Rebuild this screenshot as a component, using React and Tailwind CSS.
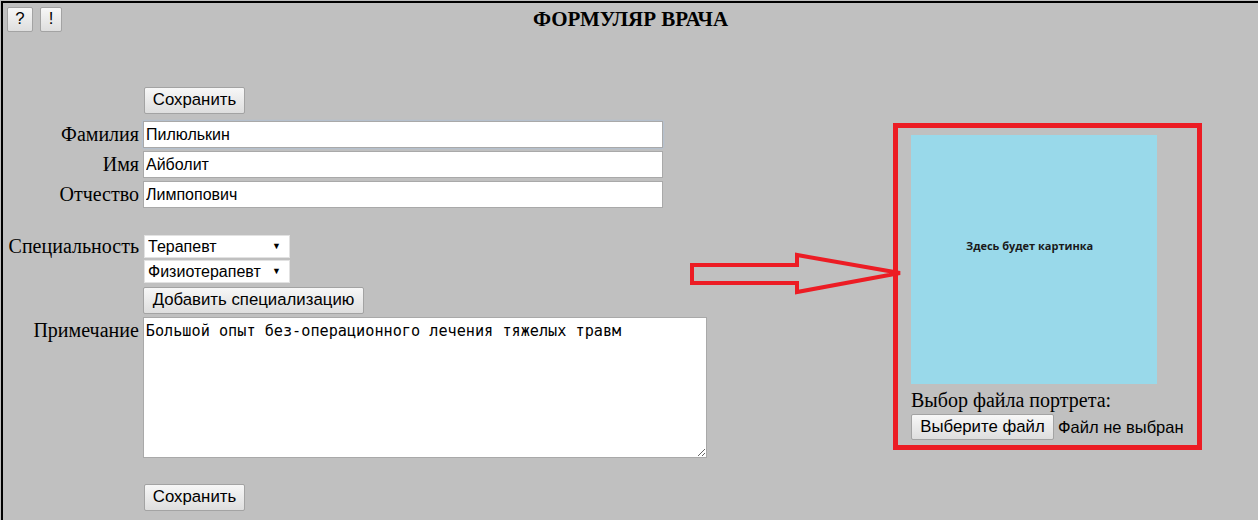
import { useState } from 'react'

const btn =
  'border border-[#a3a3a3] rounded-[2px] bg-linear-to-b from-[#f7f7f7] to-[#dedede] text-black font-["Liberation_Sans",Arial,sans-serif] text-[16.8px] leading-none flex items-center justify-center'
const field =
  'h-[27px] w-[520px] border border-[#a9a9a9] bg-white px-[2px] text-[16px] text-black font-["Liberation_Sans",Arial,sans-serif] outline-none'

function FakeSelect({ value, options }) {
  return (
    <div className="flex h-[23px] w-[146px] items-center border border-[#e2e2e2] bg-white pl-[3px] pr-[8px]">
      <select
        defaultValue={value}
        className="min-w-0 flex-1 appearance-none bg-transparent text-[16px] leading-none text-black outline-none font-['Liberation_Sans',Arial,sans-serif]"
      >
        {options.map((o) => (
          <option key={o}>{o}</option>
        ))}
      </select>
      <span className="text-[9px] leading-none text-black">▼</span>
    </div>
  )
}

function Row({ label, children, className = '' }) {
  return (
    <div className={`flex items-center ${className}`}>
      <label className="w-[136px] text-right text-[20px] leading-[27px] text-black">{label}</label>
      <div className="ml-[4px]">{children}</div>
    </div>
  )
}

export default function App() {
  const [surname, setSurname] = useState('Пилюлькин')
  const specs = ['Терапевт', 'Физиотерапевт', 'Хирург']

  return (
    <div className="relative h-[520px] w-[1258px] overflow-hidden bg-[#c0c0c0] font-['Liberation_Serif','Times_New_Roman',serif]">
      <div className="ml-px mt-px h-full border-l-2 border-t-2 border-black">
        {/* header */}
        <div className="grid grid-cols-[1fr_auto_1fr] items-start pt-[4px]">
          <div className="flex gap-[7px] pl-[4px]">
            <button className={`${btn} h-[25px] w-[26px]`}>?</button>
            <button className={`${btn} h-[25px] w-[22px]`}>!</button>
          </div>
          <h1 className="text-[21px] font-bold leading-[24px] text-black">ФОРМУЛЯР ВРАЧА</h1>
          <div />
        </div>

        <div className="flex items-start">
          {/* form */}
          <div className="flex w-[704px] flex-col">
            <div className="ml-[141px] mt-[55px]">
              <button className={`${btn} h-[27px] w-[101px]`}>Сохранить</button>
            </div>

            <Row label="Фамилия" className="mt-[7px]">
              <input
                value={surname}
                onChange={(e) => setSurname(e.target.value)}
                className={`${field} border-[#7ea6d8] shadow-[0_0_2px_#9fc0ea]`}
              />
            </Row>
            <Row label="Имя" className="mt-[3px]">
              <input defaultValue="Айболит" className={field} />
            </Row>
            <Row label="Отчество" className="mt-[3px]">
              <input defaultValue="Лимпопович" className={field} />
            </Row>

            <div className="mt-[27px] flex items-start">
              <label className="w-[136px] text-right text-[20px] leading-[23px] text-black">Специальность</label>
              <div className="ml-[5px] flex flex-col">
                <FakeSelect value="Терапевт" options={specs} />
                <div className="mt-[2px]">
                  <FakeSelect value="Физиотерапевт" options={specs} />
                </div>
                <button className={`${btn} mt-[4px] ml-[-1px] h-[27px] w-[221px]`}>Добавить специализацию</button>
              </div>
            </div>

            <div className="mt-[3px] flex items-start">
              <label className="w-[136px] pt-[1px] text-right text-[20px] leading-[24px] text-black">Примечание</label>
              <textarea
                defaultValue="Большой опыт без-операционного лечения тяжелых травм"
                className="ml-[4px] h-[141px] w-[565px] resize border border-[#a9a9a9] bg-white px-[2px] pt-[4px] text-[15.2px] leading-[18px] text-black outline-none font-['DejaVu_Sans_Mono',monospace]"
              />
            </div>

            <div className="ml-[141px] mt-[26px]">
              <button className={`${btn} h-[27px] w-[101px]`}>Сохранить</button>
            </div>
          </div>

          {/* portrait */}
          <div className="ml-[186px] mt-[91px] h-[327px] w-[309px] border-[5px] border-[#ec1c24] pl-[13px] pt-[7px]">
            <div className="h-[249px] w-[246px] bg-[#99d9ea] pl-[55px] pt-[98px]">
              <span className="text-[11px] font-bold text-[#1a1a1a] font-['Open_Sans',sans-serif]">Здесь будет картинка</span>
            </div>
            <div className="mt-[6px] text-[20px] leading-[20px] text-black">Выбор файла портрета:</div>
            <div className="mt-[4px] flex items-center">
              <button className={`${btn} h-[26px] w-[143px]`}>Выберите файл</button>
              <span className="ml-[4px] text-[16.5px] text-black font-['Liberation_Sans',Arial,sans-serif]">Файл не выбран</span>
            </div>
          </div>
        </div>
      </div>

      {/* annotation arrow */}
      <svg className="pointer-events-none absolute left-[688px] top-[249px]" width="220" height="50" viewBox="0 0 220 50">
        <polygon
          points="4,16 109,16 109,6 212,24 109,43 109,34 4,34"
          fill="none"
          stroke="#ec1c24"
          strokeWidth="4"
          strokeLinejoin="miter"
        />
      </svg>
    </div>
  )
}
